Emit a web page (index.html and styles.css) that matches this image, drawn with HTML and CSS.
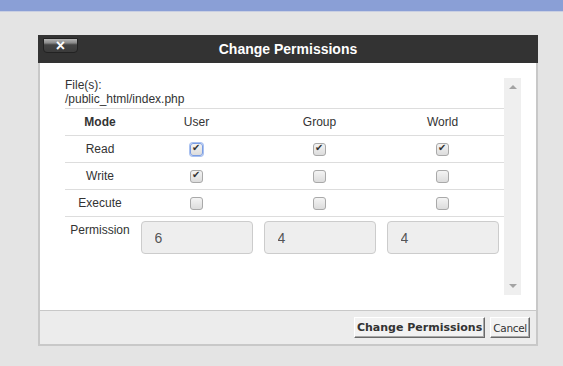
FILE: index.html
```html
<!DOCTYPE html>
<html lang="en">
<head>
    <meta charset="UTF-8">
    <title>Change Permissions</title>
    <link rel="stylesheet" href="styles.css">
</head>
<body>
    <div class="topbar"></div>
    <div class="dialog">
        <div class="dialog-header">
            <button type="button" class="close-btn">&times;</button>
            <span class="dialog-title">Change Permissions</span>
        </div>
        <div class="dialog-body">
            <div class="scroll-area">
                <div class="content">
                    <div class="file-info">
                        <div>File(s):</div>
                        <div>/public_html/index.php</div>
                    </div>
                    <table class="perm-table">
                        <tr>
                            <th class="mode">Mode</th>
                            <th>User</th>
                            <th>Group</th>
                            <th>World</th>
                        </tr>
                        <tr>
                            <td>Read</td>
                            <td><input type="checkbox" class="chk focused" checked></td>
                            <td><input type="checkbox" class="chk" checked></td>
                            <td><input type="checkbox" class="chk" checked></td>
                        </tr>
                        <tr>
                            <td>Write</td>
                            <td><input type="checkbox" class="chk" checked></td>
                            <td><input type="checkbox" class="chk"></td>
                            <td><input type="checkbox" class="chk"></td>
                        </tr>
                        <tr>
                            <td>Execute</td>
                            <td><input type="checkbox" class="chk"></td>
                            <td><input type="checkbox" class="chk"></td>
                            <td><input type="checkbox" class="chk"></td>
                        </tr>
                        <tr class="perm-row">
                            <td>Permission</td>
                            <td><input type="text" class="perm-input" value="6" readonly></td>
                            <td><input type="text" class="perm-input" value="4" readonly></td>
                            <td><input type="text" class="perm-input" value="4" readonly></td>
                        </tr>
                    </table>
                </div>
                <div class="scrollbar">
                    <span class="arrow-up"></span>
                    <span class="arrow-down"></span>
                </div>
            </div>
        </div>
        <div class="dialog-footer">
            <button type="button" class="win-btn primary">Change Permissions</button>
            <button type="button" class="win-btn">Cancel</button>
        </div>
    </div>
</body>
</html>
```

FILE: styles.css
```css
body {
    font-family: 'Liberation Sans', Arial, sans-serif;
    background-color: #e4e4e4;
    margin: 0;
    color: #333;
}

.topbar {
    height: 11px;
    background-color: #8a9fd6;
    border-bottom: 1px solid #c9cfe2;
}

.dialog {
    width: 500px;
    margin: 23px 0 0 38px;
}

.dialog-header {
    height: 28px;
    background-color: #333;
    display: grid;
    grid-template-columns: 1fr auto 1fr;
    align-items: center;
}

.close-btn {
    justify-self: start;
    align-self: start;
    margin: 3px 0 0 5px;
    width: 35px;
    height: 15px;
    padding: 0;
    border: 1px solid #222;
    border-radius: 1px 1px 4px 4px;
    background: linear-gradient(#b4b4b4 0%, #8a8a8a 30%, #444 45%, #3b3b3b 100%);
    color: #fff;
    font-family: 'Liberation Sans', Arial, sans-serif;
    font-weight: bold;
    font-size: 16px;
    line-height: 12px;
}

.dialog-title {
    grid-column: 2;
    color: #fff;
    font-weight: bold;
    font-size: 14px;
}

.dialog-body {
    background-color: #fff;
    border-left: 2px solid #c8c8c8;
    border-right: 2px solid #c8c8c8;
    height: 247px;
    box-sizing: border-box;
    padding: 15px 15px 15px 25px;
}

.scroll-area {
    display: flex;
    height: 217px;
}

.content {
    flex: 1;
    font-size: 12px;
}

.file-info {
    padding: 0 0 2px 0;
    line-height: 14px;
    border-bottom: 1px solid #ddd;
}

.perm-table {
    width: 100%;
    border-collapse: collapse;
    table-layout: fixed;
}

.perm-table th,
.perm-table td {
    height: 26px;
    padding: 0;
    text-align: center;
    vertical-align: middle;
    border-bottom: 1px solid #ddd;
    font-size: 12px;
}

.perm-table th {
    font-weight: normal;
}

.perm-table th.mode {
    width: 70px;
    font-weight: bold;
}

.perm-row td {
    border-bottom: none;
    vertical-align: top;
    padding-top: 6px;
}

.chk {
    appearance: none;
    -webkit-appearance: none;
    width: 13px;
    height: 13px;
    margin: 0;
    border: 1px solid #a9a9a9;
    border-radius: 3px;
    background: linear-gradient(#f4f4f4, #dcdcdc);
    vertical-align: middle;
    position: relative;
    box-sizing: border-box;
}

.chk:checked::after {
    content: "\2714";
    position: absolute;
    left: 1px;
    top: -2px;
    font-family: 'DejaVu Sans', sans-serif;
    font-size: 10px;
    color: #333;
}

.chk.focused {
    border-color: #7a9de4;
    box-shadow: 0 0 0 1px #a9c1f0;
}

.perm-input {
    display: block;
    margin: -2px auto 0;
    width: 112px;
    height: 33px;
    box-sizing: border-box;
    border: 1px solid #ccc;
    border-radius: 4px;
    background-color: #eee;
    padding: 0 0 0 13px;
    font-family: 'Liberation Sans', Arial, sans-serif;
    font-size: 14px;
    color: #555;
}

.scrollbar {
    width: 17px;
    background-color: #efefef;
    display: flex;
    flex-direction: column;
    justify-content: space-between;
    align-items: center;
    padding: 7px 0;
    box-sizing: border-box;
}

.arrow-up {
    border-left: 4px solid transparent;
    border-right: 4px solid transparent;
    border-bottom: 4px solid #a3a3a3;
}

.arrow-down {
    border-left: 4px solid transparent;
    border-right: 4px solid transparent;
    border-top: 4px solid #a3a3a3;
}

.dialog-footer {
    background-color: #ececec;
    border: 2px solid #c8c8c8;
    border-top: 1px solid #c8c8c8;
    height: 36px;
    box-sizing: border-box;
    display: flex;
    justify-content: flex-end;
    align-items: center;
    gap: 5px;
    padding-right: 6px;
}

.win-btn {
    font-family: 'DejaVu Sans', Verdana, sans-serif;
    font-size: 10.5px;
    letter-spacing: -0.3px;
    color: #333;
    background-color: #f2f2f2;
    height: 21px;
    padding: 0 2px;
    border: 1px solid;
    border-color: #fff #6a6a6a #6a6a6a #fff;
    box-shadow: inset -1px -1px 0 #a8a8a8;
}

.win-btn.primary {
    font-size: 11px;
    font-weight: bold;
    letter-spacing: 0;
}
```
